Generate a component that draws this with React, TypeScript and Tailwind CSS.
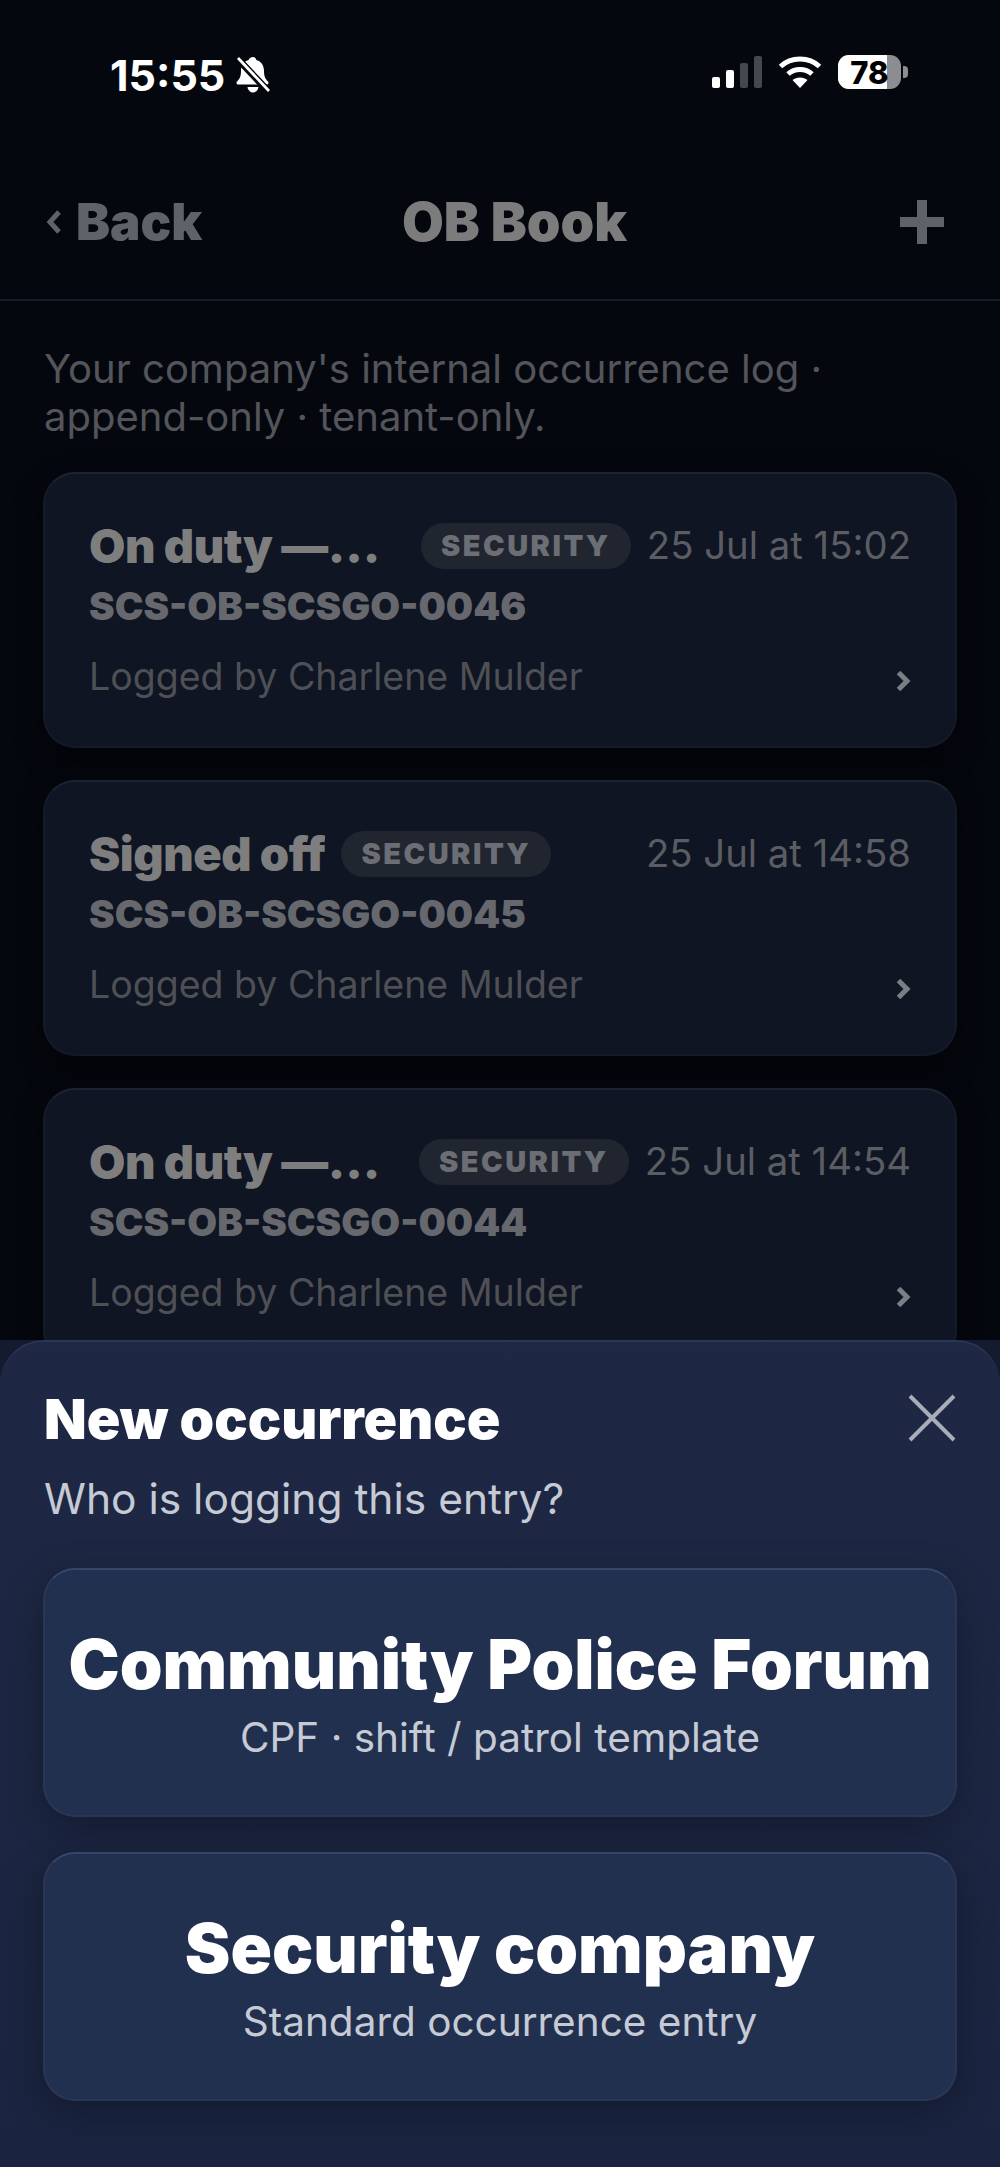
import React from "react";

const Chevron = () => (
  <svg width="16" height="20" viewBox="0 0 16 20" fill="none" className="mt-[8px] shrink-0">
    <path d="M3.500 1.500 L12 10 L3.500 18.500" stroke="#7b7e85" strokeWidth="5" />
  </svg>
);

function Card({ title, fill, id, date }: { title: string; fill: boolean; id: string; date: string }) {
  return (
    <div className="h-[276px] rounded-[32px] border-2 border-[#141a28] border-t-[#1c2333] bg-[#0f1522] px-[44px] pt-[48px] shadow-[0_10px_28px_rgba(0,0,0,0.5)]">
      <div className="flex h-[48px] items-center">
        <div
          className={
            fill
              ? "min-w-0 flex-1 truncate text-[47px] leading-[58px] font-black tracking-[-0.5px] text-[#7e7e7e]"
              : "shrink-0 truncate text-[47px] leading-[58px] font-black tracking-[-0.5px] text-[#7e7e7e]"
          }
        >
          {title}
        </div>
        <span className="ml-[16px] flex h-[46px] w-[210px] shrink-0 items-center justify-center rounded-[23px] bg-[#20252f] text-[29px] font-black tracking-[2.500px] text-[#6b6e74]">
          SECURITY
        </span>
        <span className="ml-auto shrink-0 pl-[16px] text-[38.3px] text-[#5b5d63]">{date}</span>
      </div>
      <div className="mt-[11px] text-[38.5px] leading-[50px] font-black text-[#66686d]">{id}</div>
      <div className="mt-[20px] flex items-center justify-between">
        <span className="text-[37.5px] leading-[52px] text-[#4e5056]">Logged by Charlene Mulder</span>
        <Chevron />
      </div>
    </div>
  );
}

function Option({ title, sub }: { title: string; sub: string }) {
  return (
    <div className="flex h-[249px] flex-col items-center justify-center rounded-[32px] border-2 border-[#2b3654] border-t-[#38456a] bg-[#22304f] pt-[3px] shadow-[0_10px_36px_rgba(0,0,0,0.28)]">
      <div className="text-[68.5px] leading-[80px] font-black whitespace-nowrap text-white">{title}</div>
      <div className="mt-[8px] text-[40.5px] leading-[50px] text-[#c6cad4]">{sub}</div>
    </div>
  );
}

export default function App() {
  return (
    <div className="relative h-[2167px] w-[1000px] overflow-hidden bg-[#05070e] font-['Inter',sans-serif]">
      <div className="flex h-[136px] items-start justify-between pt-[47px] pr-[92px] pl-[110px]">
        <div className="flex items-center gap-[10px]">
          <span className="text-[43px] leading-[56px] font-bold text-white">15:55</span>
          <svg width="36" height="38" viewBox="0 0 36 38" fill="white">
            <path d="M18 1c2 0 3 1.400 3.400 3 5 1.500 7.600 5.500 7.600 11 0 5 1 7.600 4 10.500 1 1 .5 3-1.500 3H3.500c-2 0-2.500-2-1.500-3 3-2.900 4-5.500 4-10.500 0-5.500 2.600-9.500 7.600-11C14 2.400 16 1 18 1z" />
            <path d="M12.500 31h11c-.500 3.500-3 5.500-5.500 5.500s-5-2-5.500-5.500z" />
            <path d="M2 2 L34 36" stroke="#05070e" strokeWidth="7" />
            <path d="M3 2 L34 35" stroke="white" strokeWidth="2.800" />
          </svg>
        </div>
        <div className="flex items-center gap-[16px] pt-[8px]">
          <svg width="50" height="32" viewBox="0 0 50 32">
            <rect x="0" y="21" width="8" height="11" rx="2" fill="white" />
            <rect x="14" y="14" width="8" height="18" rx="2" fill="white" />
            <rect x="28" y="7" width="8" height="25" rx="2" fill="#45484e" />
            <rect x="42" y="0" width="8" height="32" rx="2" fill="#45484e" />
          </svg>
          <svg width="44" height="34" viewBox="0 0 44 34" fill="none" stroke="white">
            <path d="M2.500 11.500C13 1.500 31 1.500 41.500 11.500" strokeWidth="5" />
            <path d="M10 19c6.500-6 17.500-6 24 0" strokeWidth="5" />
            <path d="M22 33 L14.500 25c4-3.500 11-3.500 15 0z" fill="white" stroke="none" />
          </svg>
          <div className="relative flex items-center">
            <div className="relative flex h-[34px] w-[63px] items-center justify-center overflow-hidden rounded-[11px] bg-[#8c8d90]">
              <div className="absolute inset-y-0 left-0 w-[49px] bg-white" />
              <span className="relative text-[31px] leading-none font-extrabold text-black">78</span>
            </div>
            <div className="ml-[2px] h-[12px] w-[5px] rounded-r-[4px] bg-[#8c8d90]" />
          </div>
        </div>
      </div>

      <div className="relative flex h-[165px] items-center justify-between border-b-2 border-[#161b29] pt-[8px] pr-[56px] pl-[45px]">
        <div className="flex items-center gap-[13px]">
          <svg width="18" height="24" viewBox="0 0 18 24" fill="none">
            <path d="M14 2 L5 12 L14 22" stroke="#5f6268" strokeWidth="5" />
          </svg>
          <span className="text-[51px] leading-[64px] font-black text-[#5f6268]">Back</span>
        </div>
        <span className="absolute left-[402px] text-[54px] leading-[64px] font-black text-[#7c7c7c]">OB Book</span>
        <svg width="44" height="44" viewBox="0 0 44 44" fill="#5f6268" className="relative">
          <rect x="17" y="0" width="10" height="44" />
          <rect x="0" y="17" width="44" height="10" />
        </svg>
      </div>

      <div className="px-[43px] pt-[44px]">
        <p className="pl-[1px] text-[40px] leading-[48px] text-[#53555a]">
          Your company's internal occurrence log ·
          <br />
          append-only · tenant-only.
        </p>
        <div className="mt-[31px] flex flex-col gap-[32px]">
          <Card title="On duty —…" fill id="SCS-OB-SCSGO-0046" date="25 Jul at 15:02" />
          <Card title="Signed off" fill={false} id="SCS-OB-SCSGO-0045" date="25 Jul at 14:58" />
          <Card title="On duty —…" fill id="SCS-OB-SCSGO-0044" date="25 Jul at 14:54" />
        </div>
      </div>

      <div className="absolute inset-x-0 top-[1340px] bottom-0 bg-[#141b2e]">
        <div className="h-full rounded-t-[44px] border-t-2 border-[#2a3454] bg-gradient-to-b from-[#1e2844] to-[#1a2440] px-[43px] pt-[45px]">
          <div className="flex items-start justify-between">
            <h2 className="pl-[1px] text-[55.5px] leading-[64px] font-black text-white">New occurrence</h2>
            <svg width="48" height="48" viewBox="0 0 48 48" fill="none" className="mt-[7px] mr-[1px]">
              <path d="M2 2 L46 46 M46 2 L2 46" stroke="#a8adb8" strokeWidth="4" />
            </svg>
          </div>
          <p className="mt-[23px] pl-[1px] text-[42.5px] leading-[50px] text-[#c6cad4]">Who is logging this entry?</p>
          <div className="mt-[44px] flex flex-col gap-[35px]">
            <Option title="Community Police Forum" sub="CPF · shift / patrol template" />
            <Option title="Security company" sub="Standard occurrence entry" />
          </div>
        </div>
      </div>
    </div>
  );
}
